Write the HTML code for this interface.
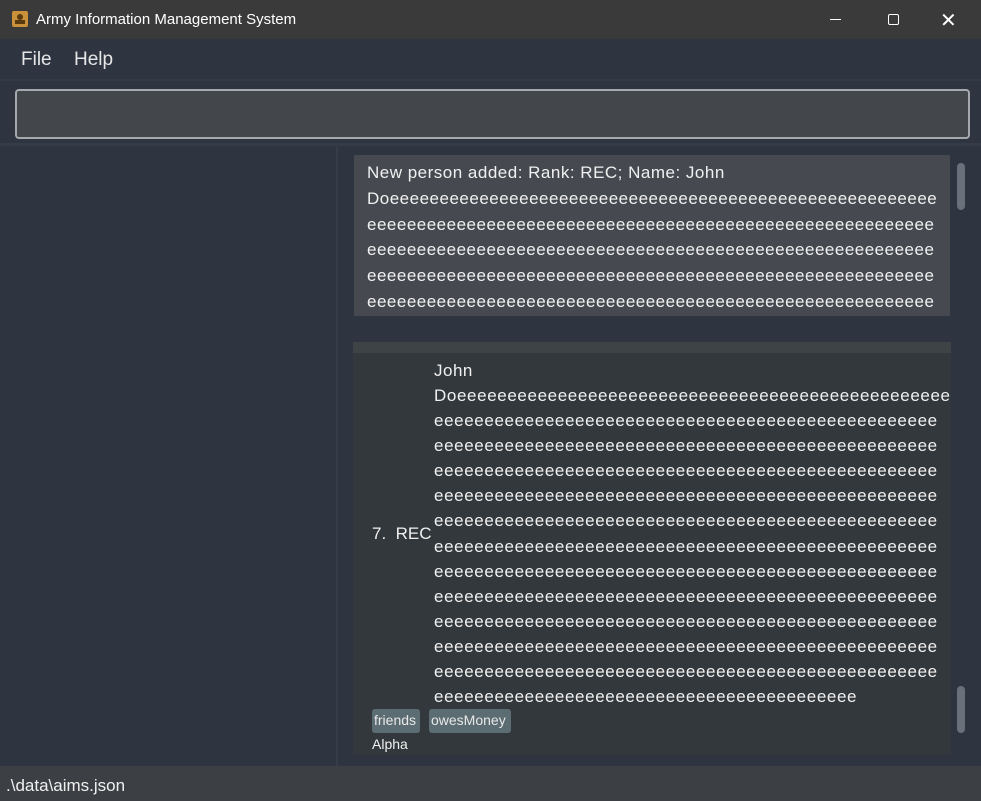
<!DOCTYPE html><html><head><style>
*{margin:0;padding:0;box-sizing:border-box}
body{width:981px;height:801px;overflow:hidden;background:#2e3440;font-family:"Liberation Sans",sans-serif;position:relative;color:#e8e8e8}
.a{position:absolute}
.ln{position:absolute;white-space:nowrap;font-size:17px;letter-spacing:0.5px;color:#f0f0f0}
.c{letter-spacing:0.62px}
</style></head><body>
<div class="a" style="left:0;top:0;width:981px;height:39px;background:#3a3a3a"></div>
<div class="a" style="left:12px;top:11px;width:16px;height:16px;background:#c8913a;border-radius:2px"><div class="a" style="left:5px;top:3px;width:6px;height:6px;background:#5a3a10;border-radius:50%"></div><div class="a" style="left:3px;top:9px;width:10px;height:4px;background:#5a3a10"></div></div>
<div class="a" style="left:36px;top:11px;font-size:15px;color:#fff">Army Information Management System</div>
<div class="a" style="left:830px;top:19px;width:11px;height:1px;background:#fff"></div>
<div class="a" style="left:888px;top:14px;width:11px;height:11px;border:1px solid #fff;border-radius:2px"></div>
<div class="a" style="left:940px;top:8px;font-size:20px;color:#fff">✕</div>
<div class="a" style="left:0;top:39px;width:981px;height:42px;background:#2e3440;border-bottom:2px solid #343b47"></div>
<div class="a" style="left:21px;top:49px;font-size:19px;color:#e6e6e6">File</div>
<div class="a" style="left:74px;top:49px;font-size:19px;color:#e6e6e6">Help</div>
<div class="a" style="left:0;top:82px;width:981px;height:64px;background:#2e3440;border-bottom:3px solid #353c48"></div>
<div class="a" style="left:15px;top:89px;width:955px;height:50px;background:#43464b;border:2px solid #a5a8ad;border-radius:4px"></div>
<div class="a" style="left:0;top:147px;width:338px;height:619px;background:#2e3440;border-right:2px solid #363d49"></div>
<div class="a" style="left:354px;top:155px;width:596px;height:161px;background:#464a50"></div>
<div class="ln" style="left:367px;top:163px">New person added: Rank: REC; Name: John</div>
<div class="ln" style="left:367px;top:189px">Doeeeeeeeeeeeeeeeeeeeeeeeeeeeeeeeeeeeeeeeeeeeeeeeeeeeeeee</div>
<div class="ln" style="left:367px;top:215px">eeeeeeeeeeeeeeeeeeeeeeeeeeeeeeeeeeeeeeeeeeeeeeeeeeeeeeeee</div>
<div class="ln" style="left:367px;top:240px">eeeeeeeeeeeeeeeeeeeeeeeeeeeeeeeeeeeeeeeeeeeeeeeeeeeeeeeee</div>
<div class="ln" style="left:367px;top:266px">eeeeeeeeeeeeeeeeeeeeeeeeeeeeeeeeeeeeeeeeeeeeeeeeeeeeeeeee</div>
<div class="ln" style="left:367px;top:292px;height:24px;overflow:hidden">eeeeeeeeeeeeeeeeeeeeeeeeeeeeeeeeeeeeeeeeeeeeeeeeeeeeeeeee</div>
<div class="a" style="left:957px;top:163px;width:8px;height:47px;background:#6a707a;border-radius:4px"></div>
<div class="a" style="left:353px;top:342px;width:598px;height:413px;background:#33383c"></div>
<div class="a" style="left:353px;top:342px;width:598px;height:11px;background:#3e4346"></div>
<div class="ln" style="left:434px;top:361px">John</div>
<div class="ln c" style="left:434px;top:386px">Doeeeeeeeeeeeeeeeeeeeeeeeeeeeeeeeeeeeeeeeeeeeeeeeee</div>
<div class="ln c" style="left:434px;top:411px">eeeeeeeeeeeeeeeeeeeeeeeeeeeeeeeeeeeeeeeeeeeeeeeeee</div>
<div class="ln c" style="left:434px;top:436px">eeeeeeeeeeeeeeeeeeeeeeeeeeeeeeeeeeeeeeeeeeeeeeeeee</div>
<div class="ln c" style="left:434px;top:461px">eeeeeeeeeeeeeeeeeeeeeeeeeeeeeeeeeeeeeeeeeeeeeeeeee</div>
<div class="ln c" style="left:434px;top:486px">eeeeeeeeeeeeeeeeeeeeeeeeeeeeeeeeeeeeeeeeeeeeeeeeee</div>
<div class="ln c" style="left:434px;top:511px">eeeeeeeeeeeeeeeeeeeeeeeeeeeeeeeeeeeeeeeeeeeeeeeeee</div>
<div class="ln c" style="left:434px;top:537px">eeeeeeeeeeeeeeeeeeeeeeeeeeeeeeeeeeeeeeeeeeeeeeeeee</div>
<div class="ln c" style="left:434px;top:562px">eeeeeeeeeeeeeeeeeeeeeeeeeeeeeeeeeeeeeeeeeeeeeeeeee</div>
<div class="ln c" style="left:434px;top:587px">eeeeeeeeeeeeeeeeeeeeeeeeeeeeeeeeeeeeeeeeeeeeeeeeee</div>
<div class="ln c" style="left:434px;top:612px">eeeeeeeeeeeeeeeeeeeeeeeeeeeeeeeeeeeeeeeeeeeeeeeeee</div>
<div class="ln c" style="left:434px;top:637px">eeeeeeeeeeeeeeeeeeeeeeeeeeeeeeeeeeeeeeeeeeeeeeeeee</div>
<div class="ln c" style="left:434px;top:662px">eeeeeeeeeeeeeeeeeeeeeeeeeeeeeeeeeeeeeeeeeeeeeeeeee</div>
<div class="ln c" style="left:434px;top:687px">eeeeeeeeeeeeeeeeeeeeeeeeeeeeeeeeeeeeeeeeee</div>
<div class="ln" style="left:372px;top:524px;letter-spacing:0">7.&nbsp;&nbsp;REC</div>
<div class="a" style="left:372px;top:709px;width:48px;height:24px;background:#5b6c72;border-radius:3px;font-size:14px;color:#e8e8e8;padding:3px 0 0 2px">friends</div>
<div class="a" style="left:429px;top:709px;width:82px;height:24px;background:#5b6c72;border-radius:3px;font-size:14px;color:#e8e8e8;padding:3px 0 0 2px">owesMoney</div>
<div class="a" style="left:372px;top:736px;font-size:14px;color:#f0f0f0">Alpha</div>
<div class="a" style="left:957px;top:686px;width:8px;height:47px;background:#6a707a;border-radius:4px"></div>
<div class="a" style="left:0;top:766px;width:981px;height:35px;background:#3c3f44"></div>
<div class="a" style="left:6px;top:776px;font-size:17px;color:#f0f0f0">.\data\aims.json</div>
</body></html>
